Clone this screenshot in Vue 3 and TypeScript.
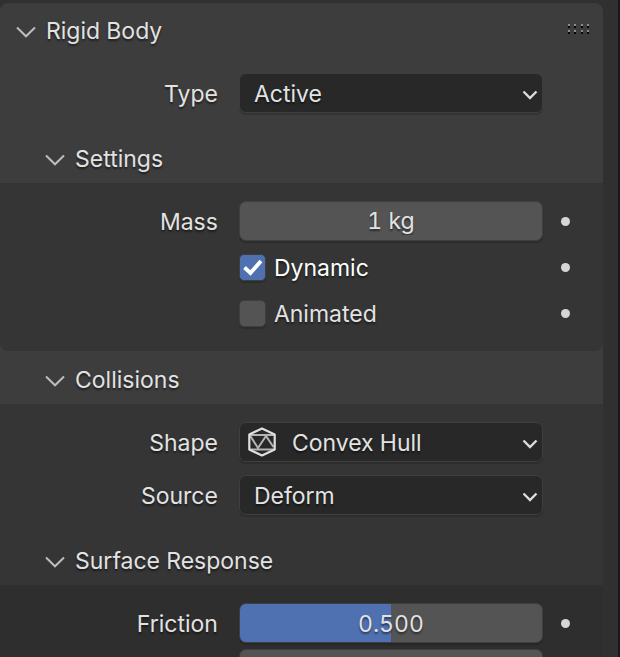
<script setup lang="ts">
import { computed, reactive, ref } from 'vue'

type SectionName = 'rigidBody' | 'settings' | 'collisions' | 'surface'

const open = reactive<Record<SectionName, boolean>>({
  rigidBody: true,
  settings: true,
  collisions: true,
  surface: true,
})

function toggle(name: SectionName): void {
  open[name] = !open[name]
}

const bodyType = ref('Active')
const mass = ref('1 kg')
const dynamic = ref(true)
const animated = ref(false)
const shape = ref('Convex Hull')
const source = ref('Deform')
const friction = ref(0.5)
const bounciness = ref(0)

const frictionText = computed(() => Number(friction.value).toFixed(3))

const gripColumns = [0, 6, 13, 19]
</script>

<template>
  <main class="editor">
    <section class="panel">
      <header class="panel-header">
        <button type="button" class="toggle" :aria-expanded="open.rigidBody" @click="toggle('rigidBody')">
          <svg class="fold" :class="{ closed: !open.rigidBody }" viewBox="0 0 20 12" aria-hidden="true">
            <path d="M1 1.5 L10 10.3 L19 1.5" />
          </svg>
          <span>Rigid Body</span>
        </button>
        <svg class="grip" viewBox="0 0 22 10" aria-hidden="true">
          <template v-for="x in gripColumns" :key="x">
            <rect class="grip-light" :x="x" y="0" width="2" height="2" />
            <rect class="grip-dark" :x="x" y="2" width="2" height="2" />
            <rect class="grip-light" :x="x" y="6" width="2" height="2" />
            <rect class="grip-dark" :x="x" y="8" width="2" height="2" />
          </template>
        </svg>
      </header>

      <div v-if="open.rigidBody" class="panel-body">
        <div class="row">
          <label class="name" for="body-type">Type</label>
          <div class="field">
            <select id="body-type" v-model="bodyType" class="menu">
              <option>Active</option>
              <option>Passive</option>
            </select>
            <svg class="arrow" viewBox="0 0 16 10" aria-hidden="true"><path d="M1.5 1.5 L8 8 L14.5 1.5" /></svg>
          </div>
        </div>

        <section class="sub after-row">
          <button type="button" class="toggle sub-header" :aria-expanded="open.settings" @click="toggle('settings')">
            <svg class="fold" :class="{ closed: !open.settings }" viewBox="0 0 20 12" aria-hidden="true">
              <path d="M1 1.5 L10 10.3 L19 1.5" />
            </svg>
            <span>Settings</span>
          </button>
          <div v-if="open.settings" class="sub-body rounded">
            <div class="rows tight">
              <div class="row">
                <label class="name" for="mass">Mass</label>
                <div class="field">
                  <input id="mass" v-model="mass" class="number" type="text" />
                </div>
                <button type="button" class="key" aria-label="Animate mass"></button>
              </div>
              <div class="row">
                <label class="check">
                  <input v-model="dynamic" type="checkbox" />
                  <svg class="tick" viewBox="0 0 27 27" aria-hidden="true"><path d="M5.5 13.5 L11.5 19 L22 7" /></svg>
                  <span>Dynamic</span>
                </label>
                <button type="button" class="key" aria-label="Animate dynamic"></button>
              </div>
              <div class="row">
                <label class="check">
                  <input v-model="animated" type="checkbox" />
                  <svg class="tick" viewBox="0 0 27 27" aria-hidden="true"><path d="M5.5 13.5 L11.5 19 L22 7" /></svg>
                  <span>Animated</span>
                </label>
                <button type="button" class="key" aria-label="Animate animated"></button>
              </div>
            </div>
          </div>
        </section>

        <section class="sub after-sub">
          <button type="button" class="toggle sub-header" :aria-expanded="open.collisions" @click="toggle('collisions')">
            <svg class="fold" :class="{ closed: !open.collisions }" viewBox="0 0 20 12" aria-hidden="true">
              <path d="M1 1.5 L10 10.3 L19 1.5" />
            </svg>
            <span>Collisions</span>
          </button>
          <div v-if="open.collisions" class="sub-body">
            <div class="rows">
              <div class="row">
                <label class="name" for="shape">Shape</label>
                <div class="field">
                  <select id="shape" v-model="shape" class="menu with-icon">
                    <option>Box</option>
                    <option>Sphere</option>
                    <option>Convex Hull</option>
                    <option>Mesh</option>
                  </select>
                  <svg class="shape-icon" viewBox="0 0 28 30" aria-hidden="true">
                    <path class="inner" d="M2 8 H26 M2 22.5 H26 M2 8.5 L10 21 L18 9 L25.5 20" />
                    <path class="outer" d="M14 1.5 L26.7 7.5 V22.5 L14 28.5 L1.3 22.5 V7.5 Z" />
                  </svg>
                  <svg class="arrow" viewBox="0 0 16 10" aria-hidden="true"><path d="M1.5 1.5 L8 8 L14.5 1.5" /></svg>
                </div>
              </div>
              <div class="row">
                <label class="name" for="source">Source</label>
                <div class="field">
                  <select id="source" v-model="source" class="menu">
                    <option>Base</option>
                    <option>Deform</option>
                    <option>Final</option>
                  </select>
                  <svg class="arrow" viewBox="0 0 16 10" aria-hidden="true"><path d="M1.5 1.5 L8 8 L14.5 1.5" /></svg>
                </div>
              </div>
            </div>

            <section class="sub after-row">
              <button type="button" class="toggle sub-header" :aria-expanded="open.surface" @click="toggle('surface')">
                <svg class="fold" :class="{ closed: !open.surface }" viewBox="0 0 20 12" aria-hidden="true">
                  <path d="M1 1.5 L10 10.3 L19 1.5" />
                </svg>
                <span>Surface Response</span>
              </button>
              <div v-if="open.surface" class="sub-body deep">
                <div class="rows tight">
                  <div class="row">
                    <label class="name" for="friction">Friction</label>
                    <div class="field">
                      <input
                        id="friction"
                        v-model="friction"
                        class="slider"
                        type="range"
                        min="0"
                        max="1"
                        step="0.001"
                        :style="{ '--fill': friction * 100 + '%' }"
                      />
                      <output class="value" for="friction">{{ frictionText }}</output>
                    </div>
                    <button type="button" class="key" aria-label="Animate friction"></button>
                  </div>
                  <div class="row">
                    <div class="field second">
                      <input
                        v-model="bounciness"
                        class="slider"
                        type="range"
                        min="0"
                        max="1"
                        step="0.001"
                        aria-label="Bounciness"
                        :style="{ '--fill': bounciness * 100 + '%' }"
                      />
                    </div>
                    <button type="button" class="key" aria-label="Animate bounciness"></button>
                  </div>
                </div>
              </div>
            </section>
          </div>
        </section>
      </div>
    </section>
  </main>
</template>

<style>
body {
  background: #303030;
}
</style>

<style scoped>
.editor {
  box-sizing: border-box;
  height: 100vh;
  overflow: hidden;
  padding: 3px 15px 0 0;
  border-right: 2px solid #171717;
  background: #303030;
  color: #e2e2e2;
  font-family: Inter, "Liberation Sans", sans-serif;
  font-size: 23px;
  line-height: 30px;
  font-variant-numeric: tabular-nums;
  text-shadow: 0 2px 2px rgba(0, 0, 0, 0.5);
}

.panel {
  overflow: hidden;
  border-radius: 8px;
  background: #3d3d3d;
}

.panel-header {
  display: flex;
  align-items: center;
  height: 56px;
  padding: 0 13px 0 16px;
}

.panel-body {
  padding-top: 14px;
}

button,
input,
select {
  margin: 0;
  font: inherit;
  font-variant-numeric: inherit;
  color: inherit;
  text-shadow: inherit;
}

.toggle {
  display: flex;
  flex: 1;
  align-items: center;
  gap: 10px;
  padding: 0;
  border: 0;
  background: none;
  text-align: left;
}

.sub-header {
  width: 100%;
  height: 50px;
  padding: 2px 0 0 45px;
}

.fold {
  width: 20px;
  height: 12px;
  margin-top: 2px;
  fill: none;
  stroke: #bdbdbd;
  stroke-width: 2;
}

.fold.closed {
  transform: rotate(-90deg);
}

.grip {
  width: 22px;
  height: 10px;
  margin-bottom: 4px;
  shape-rendering: crispEdges;
}

.grip-light {
  fill: #8c8c8c;
}

.grip-dark {
  fill: #050505;
}

.after-row {
  padding-top: 20px;
}

.after-sub {
  padding-top: 3px;
}

.sub-body {
  padding: 18px 0;
  background: #353535;
}

.rounded {
  border-radius: 0 0 8px 8px;
}

.deep {
  background: #2e2e2e;
}

.rows {
  display: grid;
  gap: 13px;
}

.tight {
  gap: 6px;
}

.row {
  display: grid;
  grid-template-columns: minmax(0, 11fr) minmax(0, 14fr) 60px;
  align-items: center;
  height: 40px;
}

.name {
  padding: 2px 21px 0 0;
  text-align: right;
}

.field {
  display: grid;
  align-items: center;
}

.second {
  grid-column: 2;
}

.field > * {
  grid-area: 1 / 1;
}

.menu,
.number,
.slider {
  appearance: none;
  box-sizing: border-box;
  width: 100%;
  height: 40px;
  border: 1px solid #3f3f3f;
  border-radius: 7px;
  box-shadow: 0 2px 1px rgba(0, 0, 0, 0.16);
}

.menu {
  padding: 1px 30px 0 14px;
  background: #282828;
}

.with-icon {
  padding-left: 52px;
}

.number {
  padding: 0 10px;
  background: #545454;
  text-align: center;
}

.slider {
  background: linear-gradient(to right, #5071b1 var(--fill), #545454 var(--fill));
}

.slider::-webkit-slider-thumb {
  appearance: none;
  width: 1px;
  height: 38px;
}

.value {
  justify-self: center;
  padding-top: 1px;
  pointer-events: none;
}

.arrow {
  justify-self: end;
  width: 16px;
  height: 10px;
  margin: 3px 5px 0 0;
  fill: none;
  stroke: #dcdcdc;
  stroke-width: 2.4;
  pointer-events: none;
}

.shape-icon {
  width: 28px;
  height: 30px;
  margin-left: 9px;
  fill: none;
  pointer-events: none;
}

.outer {
  stroke: #e0e0e0;
  stroke-width: 2.2;
  stroke-linejoin: round;
}

.inner {
  stroke: #b4b4b4;
  stroke-width: 2;
}

.check {
  grid-column: 2;
  display: grid;
  grid-template-columns: 27px 1fr;
  column-gap: 8px;
  align-items: center;
}

.check span {
  padding-top: 2px;
}

.check input,
.tick {
  grid-area: 1 / 1;
  width: 27px;
  height: 27px;
}

.check input {
  appearance: none;
  box-sizing: border-box;
  border: 1px solid #3f3f3f;
  border-radius: 5px;
  background: #545454;
  box-shadow: 0 2px 1px rgba(0, 0, 0, 0.16);
}

.check input:checked {
  background: #5071b1;
}

.tick {
  visibility: hidden;
  fill: none;
  stroke: #ffffff;
  stroke-width: 3.8;
  pointer-events: none;
}

.check input:checked ~ .tick {
  visibility: visible;
}

.check input:checked ~ span {
  color: #ffffff;
}

.key {
  grid-column: 3;
  display: grid;
  place-items: center;
  width: 45px;
  height: 40px;
  padding: 0;
  border: 0;
  background: none;
}

.key::before {
  content: "";
  width: 9px;
  height: 9px;
  border-radius: 50%;
  background: #d6d6d6;
}
</style>
